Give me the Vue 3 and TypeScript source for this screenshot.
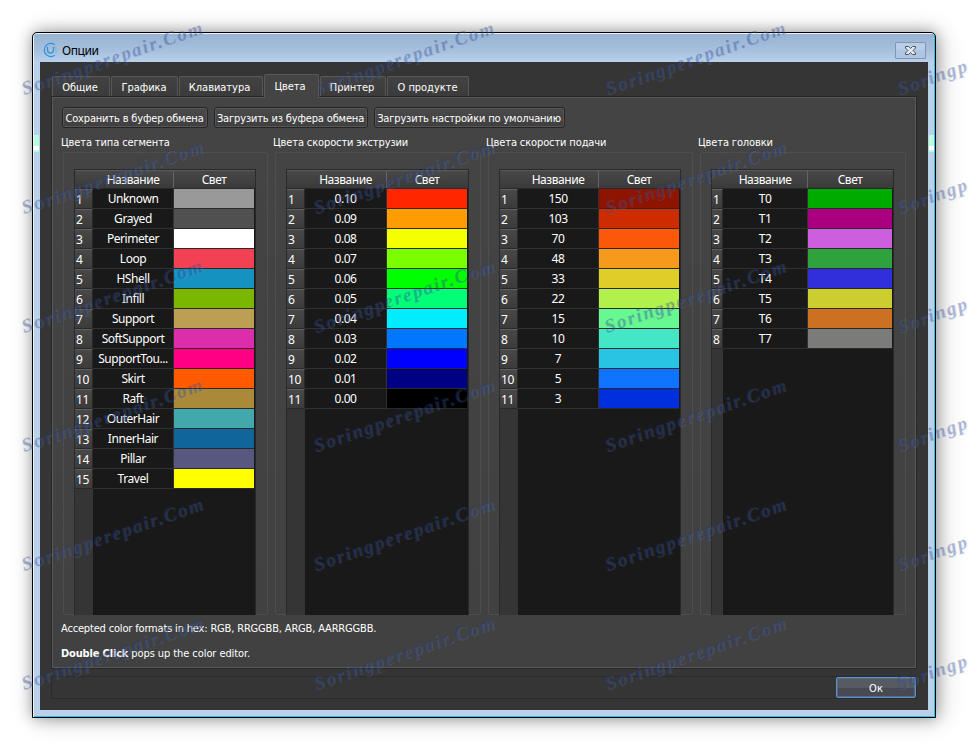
<script setup lang="ts">
interface Row { name: string; color: string }
interface Group { title: string; cls: string; rows: Row[] }

const tabs: { label: string; cls: string }[] = [
  { label: 'Общие', cls: 'w58' },
  { label: 'Графика', cls: 'w67' },
  { label: 'Клавиатура', cls: 'w84' },
  { label: 'Цвета', cls: 'w55 active' },
  { label: 'Принтер', cls: 'w66' },
  { label: 'О продукте', cls: 'w82' },
]

const rows = (list: [string, string][]): Row[] => list.map(([name, color]) => ({ name, color }))

const groups: Group[] = [
  {
    title: 'Цвета типа сегмента',
    cls: 'g1',
    rows: rows([
      ['Unknown', '#999999'], ['Grayed', '#505050'], ['Perimeter', '#ffffff'], ['Loop', '#f24153'],
      ['HShell', '#1692c0'], ['Infill', '#7ab700'], ['Support', '#bc9f53'], ['SoftSupport', '#db2eab'],
      ['SupportTou...', '#ff0084'], ['Skirt', '#ff5a00'], ['Raft', '#aa8a38'], ['OuterHair', '#42a8ab'],
      ['InnerHair', '#10669b'], ['Pillar', '#58577f'], ['Travel', '#ffff00'],
    ]),
  },
  {
    title: 'Цвета скорости экструзии',
    cls: 'g2',
    rows: rows([
      ['0.10', '#ff2600'], ['0.09', '#ff9d00'], ['0.08', '#f4ff00'], ['0.07', '#7bff00'],
      ['0.06', '#00ff00'], ['0.05', '#00ff77'], ['0.04', '#00eeff'], ['0.03', '#0077ff'],
      ['0.02', '#0000ff'], ['0.01', '#000084'], ['0.00', '#000000'],
    ]),
  },
  {
    title: 'Цвета скорости подачи',
    cls: 'g3',
    rows: rows([
      ['150', '#8e1400'], ['103', '#cd2b00'], ['70', '#fb580a'], ['48', '#f59a1a'],
      ['33', '#dfcd28'], ['22', '#b2f04c'], ['15', '#67f891'], ['10', '#43e6c5'],
      ['7', '#29c4e3'], ['5', '#0f74ff'], ['3', '#002fdd'],
    ]),
  },
  {
    title: 'Цвета головки',
    cls: 'g4',
    rows: rows([
      ['T0', '#00ab00'], ['T1', '#aa007f'], ['T2', '#cd5fdf'], ['T3', '#2fa13d'],
      ['T4', '#302fdc'], ['T5', '#cccd2f'], ['T6', '#cc7021'], ['T7', '#7b7b79'],
    ]),
  },
]

const marks = [0, 1, 2, 3, 4, 5].flatMap((r) => [24, 315.5, 607, 899].map((x) => ({ x, y: 95 + r * 119 })))
</script>

<template>
  <div class="page">
    <div class="window">
      <header class="titlebar">
        <svg class="logo" viewBox="0 0 16 16" width="15" height="16">
          <path d="M12.6 2.4A7 7 0 1 0 12.6 13.6" />
          <path d="M4.8 4.6v3.5a3.2 3.2 0 0 0 6.4 0V4.6" />
          <path d="M13.8 4v8" class="thin" />
        </svg>
        <span class="title">Опции</span>
        <button class="close" aria-label="Close">
          <svg viewBox="0 0 13 11" width="13" height="11">
            <path d="M1.500 1.500h3l2 2 2-2h3v1.500L9 5.500l2.500 2.500v1.500h-3l-2-2-2 2h-3V8L4 5.500 1.500 3z" />
          </svg>
        </button>
      </header>
      <main class="body">
        <nav class="tabs">
          <div v-for="t in tabs" :key="t.label" class="tab" :class="t.cls">{{ t.label }}</div>
        </nav>
        <section class="panel">
          <div class="actions">
            <button class="btn b1">Сохранить в буфер обмена</button>
            <button class="btn b2">Загрузить из буфера обмена</button>
            <button class="btn b3">Загрузить настройки по умолчанию</button>
          </div>
          <div class="groups">
            <div v-for="g in groups" :key="g.title" class="group" :class="g.cls">
              <h2>{{ g.title }}</h2>
              <div class="frame">
                <div class="table">
                  <div class="thead">
                    <div class="corner"></div>
                    <div class="th">Название</div>
                    <div class="th last">Свет</div>
                  </div>
                  <div v-for="(r, i) in g.rows" :key="r.name" class="tr">
                    <div class="num">{{ i + 1 }}</div>
                    <div class="name">{{ r.name }}</div>
                    <div class="swatch" :style="{ backgroundColor: r.color }"></div>
                  </div>
                  <div class="rest"><div class="gutter"></div></div>
                </div>
              </div>
            </div>
          </div>
          <p class="hint accepted">Accepted color formats in hex: RGB, RRGGBB, ARGB, AARRGGBB.</p>
          <p class="hint click"><b>Double Click</b> <span>pops up the color editor.</span></p>
        </section>
        <footer class="bottom">
          <button class="ok">Ок</button>
        </footer>
      </main>
      <div class="glint left"></div>
      <div class="glint right"></div>
    </div>
    <svg class="watermark" width="968" height="750" viewBox="0 0 968 750">
      <g v-for="(m, i) in marks" :key="i" :transform="`translate(${m.x} ${m.y}) rotate(-19)`">
        <text class="glow" x="1" y="1" textLength="190">Soringperepair.Com</text>
        <text class="ink" x="0" y="0" textLength="190">Soringperepair.Com</text>
      </g>
    </svg>
  </div>
</template>

<style>
body { margin: 0; background: #fff; }
</style>

<style scoped>
* { box-sizing: border-box; }
.page {
  position: relative;
  width: 968px;
  height: 750px;
  padding: 32px;
  overflow: hidden;
  background: #fff;
  color: #fff;
  font: 11px/14px "DejaVu Sans Condensed", "DejaVu Sans", sans-serif;
}
.window {
  position: relative;
  width: 904px;
  height: 686px;
  border: 1px solid #000;
  border-radius: 5px 5px 0 0;
  background: #b9d1ea;
  padding: 0 7px;
  box-shadow: inset 1px 1px 0 #eef6fd, inset -1px -1px 0 #22c5ea, 0 0 14px rgba(0, 0, 0, .3), 4px 1px 24px rgba(0, 0, 0, .24);
}
.titlebar {
  display: flex;
  align-items: flex-start;
  height: 29px;
  margin: 0 -6px;
  padding-left: 9px;
  background: linear-gradient(#98b4d2, #a6c0dd 60%, #b9d1ea);
  background-size: 100% 28px;
  background-position: 0 1px;
  background-repeat: no-repeat;
  border-radius: 4px 4px 0 0;
}
.logo { margin-top: 9px; fill: none; stroke: #2e93dc; stroke-width: 1.3; }
.logo .thin { stroke-width: .7; opacity: .5; }
.title { margin: 10px 0 0 4px; color: #000; font: 12px/16px "Noto Sans", sans-serif; letter-spacing: -.4px; }
.close {
  display: flex;
  align-items: center;
  justify-content: center;
  width: 31px;
  height: 17px;
  margin: 9px 8px 0 auto;
  padding: 0;
  border: 1px solid #8296b8;
  border-radius: 1px;
  background: linear-gradient(#b9cee6 50%, #aec6e1 50%);
}
.close svg { fill: #e4e9ee; stroke: #4b5260; stroke-width: 1; }
.body { height: 648px; padding: 12px 11px 0 11px; background: #353535; }
.tabs { display: flex; align-items: flex-end; height: 22px; gap: 1px; padding-left: 1px; letter-spacing: -.04px; }
.tab {
  height: 20px;
  padding-top: 4px;
  border: 1px solid #585858;
  border-bottom: 0;
  border-radius: 2px 2px 0 0;
  background: linear-gradient(#424242, #3b3b3b);
  text-align: center;
  line-height: 14px;
}
.tab.active {
  position: relative;
  z-index: 1;
  height: 24px;
  margin-bottom: -2px;
  padding-top: 5px;
  background: #444;
}
.w58 { width: 58px; padding-right: 2px; }
.w67 { width: 67px; padding-right: 1px; }
.w84 { width: 84px; padding-right: 3px; }
.w55 { width: 55px; padding-right: 3px; }
.w66 { width: 66px; padding-right: 2px; }
.w82 { width: 82px; padding-right: 1px; }
.panel {
  height: 573px;
  padding: 9px 8px 0 8px;
  border: 1px solid #282828;
  background: linear-gradient(#444, #414141);
  box-shadow: inset 0 0 0 1px #585858;
}
.actions { display: flex; gap: 6px; height: 21px; padding-left: 2px; margin-top: 1px; }
.btn {
  height: 21px;
  padding: 0 1px 0 0;
  border: 1px solid #262626;
  border-radius: 3px;
  background: linear-gradient(#4a4a4a, #3f3f3f);
  box-shadow: inset 0 0 0 1px #565656;
  color: #fff;
  font: inherit;
  line-height: 21px;
  letter-spacing: -.16px;
  white-space: nowrap;
}
.b1 { width: 146px; }
.b2 { width: 154px; }
.b3 { width: 191px; }
.groups { display: flex; height: 487px; padding-left: 1px; }
h2 { margin: 0; height: 24px; padding-top: 8px; font-size: 11px; line-height: 14px; font-weight: 400; letter-spacing: -.12px; white-space: nowrap; }
.group { flex: none; }
.g1, .g3 { width: 212px; }
.g2 { width: 213px; }
.g4 { width: 208px; }
.frame {
  width: 205px;
  height: 463px;
  margin-left: 2px;
  padding: 16px 10px 0 10px;
  border: 1px solid #4e4e4e;
  border-radius: 2px;
}
.g2 .frame, .g4 .frame { width: 206px; }
.table {
  width: 182px;
  height: 446px;
  display: flex;
  flex-direction: column;
  border: 1px solid #292929;
  border-bottom: 0;
  background: #191919;
  font: 12px/16px "Noto Sans", sans-serif;
  letter-spacing: -.45px;
}
.g2 .table, .g4 .table { width: 183px; }
.thead, .tr { display: grid; grid-template-columns: 18px 81px 80px; }
.g2 .thead, .g2 .tr { grid-template-columns: 18px 82px 80px; }
.g4 .thead, .g4 .tr { grid-template-columns: 11px 85px 84px; }
.thead {
  grid-template-rows: 17px;
  height: 19px;
  flex: none;
  border-top: 1px solid #5a5a5a;
  border-bottom: 1px solid #292929;
  background: linear-gradient(#484848, #3a3a3a);
  line-height: 18px;
}
.th { text-align: center; }
.th:not(.last) { border-right: 1px solid #646464; }
.tr { grid-template-rows: 20px; height: 20px; flex: none; }
.num {
  border-top: 1px solid #606060;
  border-right: 1px solid #292929;
  border-bottom: 1px solid #292929;
  background: linear-gradient(#484848, #3b3b3b);
  padding-left: 1px;
  line-height: 20px;
}
.name {
  border-right: 1px solid #313131;
  border-bottom: 1px solid #313131;
  text-align: center;
  line-height: 19px;
  white-space: nowrap;
}
.swatch { height: 19px; box-shadow: 0 1px 0 #292929; }
.rest { flex: 1; }
.gutter { width: 18px; height: 100%; background: #353535; }
.g4 .gutter { width: 11px; }
.hint { margin: 0; padding-left: 1px; letter-spacing: -.17px; white-space: nowrap; }
.accepted { margin-top: 7px; }
.click { margin-top: 11px; letter-spacing: -.08px; }
.click b { letter-spacing: -.16px; }
.bottom {
  display: flex;
  justify-content: flex-end;
  height: 23px;
  margin-top: 7px;
  border: 1px solid #2b2b2b;
}
.ok {
  width: 80px;
  height: 21px;
  padding: 0;
  border: 1px solid #4d94e0;
  border-radius: 2px;
  background: linear-gradient(#565a62 50%, #474a52 50%);
  box-shadow: inset 0 0 0 1px #626770;
  color: #fff;
  font: inherit;
  line-height: 21px;
}
.glint {
  position: absolute;
  top: 102px;
  width: 5px;
  height: 17px;
  background: linear-gradient(#b9fce0 11px, #fff 11px, #fff 15px, #b9fce0 15px);
}
.left { left: 1px; }
.right { right: 1px; }
.watermark {
  position: absolute;
  inset: 0;
  pointer-events: none;
  font: italic bold 19px "Liberation Serif", serif;
}
.glow { fill: #8fb2e6; opacity: .15; }
.ink { fill: #1c3484; opacity: .32; }
</style>
